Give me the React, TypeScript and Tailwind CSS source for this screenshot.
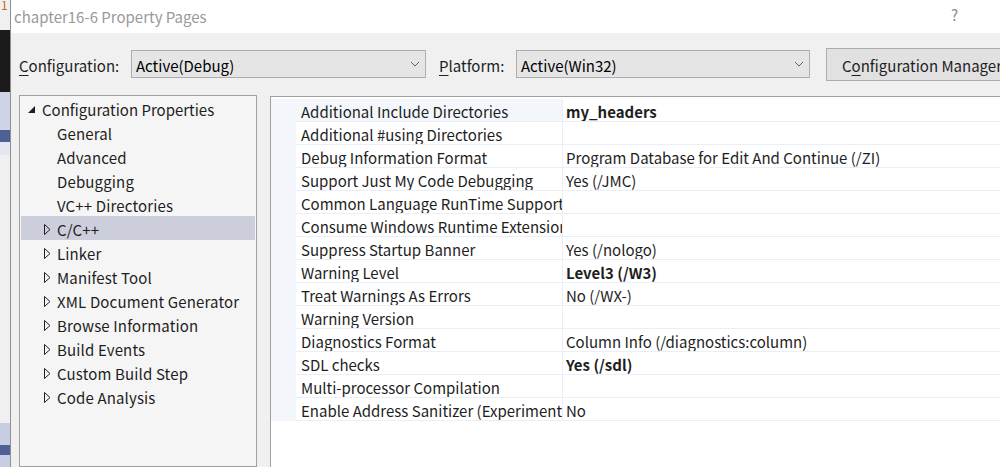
import React from "react";

const FONT = "font-['Noto_Sans_CJK_KR','Noto_Sans',sans-serif]";

function Chevron() {
  return (
    <svg width="10" height="6" viewBox="0 0 10 6" className="shrink-0">
      <polyline points="1,1 5,5 9,1" fill="none" stroke="#606060" strokeWidth="1" />
    </svg>
  );
}

function Combo({ value, width }: { value: string; width: string }) {
  return (
    <div className={`${width} shrink-0 h-[28px] bg-[#e5e5e5] border border-[#adadad] flex items-center pl-[4px] pr-[5px] justify-between`}>
      <span className="text-[15px] text-black leading-none pt-[2px]">{value}</span>
      <Chevron />
    </div>
  );
}

function Expanded() {
  return (
    <svg width="7" height="7" viewBox="0 0 7 7" className="shrink-0">
      <polygon points="7,0 7,7 0,7" fill="#1e1e1e" />
    </svg>
  );
}

function Collapsed() {
  return (
    <svg width="7" height="11" viewBox="0 0 7 11" className="shrink-0">
      <polygon points="0.5,0.5 6,5.5 0.5,10.5" fill="none" stroke="#1e1e1e" strokeWidth="1" />
    </svg>
  );
}

const treeChildren: { label: string; collapsed: boolean; selected?: boolean }[] = [
  { label: "General", collapsed: false },
  { label: "Advanced", collapsed: false },
  { label: "Debugging", collapsed: false },
  { label: "VC++ Directories", collapsed: false },
  { label: "C/C++", collapsed: true, selected: true },
  { label: "Linker", collapsed: true },
  { label: "Manifest Tool", collapsed: true },
  { label: "XML Document Generator", collapsed: true },
  { label: "Browse Information", collapsed: true },
  { label: "Build Events", collapsed: true },
  { label: "Custom Build Step", collapsed: true },
  { label: "Code Analysis", collapsed: true },
];

const rows: { name: string; value: string; bold?: boolean }[] = [
  { name: "Additional Include Directories", value: "my_headers", bold: true },
  { name: "Additional #using Directories", value: "" },
  { name: "Debug Information Format", value: "Program Database for Edit And Continue (/ZI)" },
  { name: "Support Just My Code Debugging", value: "Yes (/JMC)" },
  { name: "Common Language RunTime Support", value: "" },
  { name: "Consume Windows Runtime Extension", value: "" },
  { name: "Suppress Startup Banner", value: "Yes (/nologo)" },
  { name: "Warning Level", value: "Level3 (/W3)", bold: true },
  { name: "Treat Warnings As Errors", value: "No (/WX-)" },
  { name: "Warning Version", value: "" },
  { name: "Diagnostics Format", value: "Column Info (/diagnostics:column)" },
  { name: "SDL checks", value: "Yes (/sdl)", bold: true },
  { name: "Multi-processor Compilation", value: "" },
  { name: "Enable Address Sanitizer (Experimental)", value: "No" },
];

export default function App() {
  return (
    <div className={`${FONT} w-[1000px] h-[467px] flex overflow-hidden bg-[#f0f0f0] text-[#1e1e1e]`}>
      {/* background window strip */}
      <div className="w-[10px] h-full flex flex-col shrink-0 overflow-hidden">
        <div className="h-[30px] bg-[#f0f0f0] relative">
          <span className="absolute left-[1px] -top-[3px] text-[12px] leading-[16px] text-[#c07020]">1</span>
        </div>
        <div className="h-[62px] bg-[#1b1b1b]" />
        <div className="h-[38px] bg-[#cfd3e6]" />
        <div className="h-[12px] bg-[#4e6096]" />
        <div className="h-[13px] bg-[#e4e7f0]" />
        <div className="h-[268px] bg-[#f0f0f0]" />
        <div className="h-[22px] bg-[#c7cde2]" />
        <div className="h-[10px] bg-[#4e6096]" />
        <div className="flex-1 bg-[#c7cde2]" />
      </div>
      <div className="w-[1px] h-full bg-[#8f8f8f] shrink-0" />

      {/* dialog */}
      <div className="flex-1 flex flex-col min-w-0 overflow-hidden">
        {/* title bar */}
        <div className="h-[33px] bg-white flex items-center shrink-0 pl-[3px] pr-[42px] justify-between">
          <span className="text-[15px] text-[#999999] leading-none">chapter16-6 Property Pages</span>
          <span className="text-[15px] text-[#8a8a8a] leading-none -mt-[4px]">?</span>
        </div>

        {/* config row */}
        <div className="h-[62px] flex items-center shrink-0 pl-[8px]">
          <span className="text-[15px] w-[112px] shrink-0 leading-none pt-[2px]">
            <span className="underline underline-offset-[3px]">C</span>onfiguration:
          </span>
          <Combo value="Active(Debug)" width="w-[295px]" />
          <span className="text-[15px] ml-[13px] w-[77px] shrink-0 leading-none pt-[2px]">
            <span className="underline underline-offset-[3px]">P</span>latform:
          </span>
          <Combo value="Active(Win32)" width="w-[294px]" />
          <div className="ml-[16px] h-[33px] w-[200px] shrink-0 bg-[#e1e1e1] border border-[#adadad] flex items-center pl-[15px] whitespace-nowrap">
            <span className="text-[15px] leading-none pt-[2px]">
              C<span className="underline underline-offset-[3px]">o</span>nfiguration Manager...
            </span>
          </div>
        </div>

        {/* panels */}
        <div className="flex-1 flex pl-[8px] gap-[13px] min-h-0">
          {/* tree */}
          <div className="w-[238px] shrink-0 border border-[#a0a0a0] bg-[#f5f5f5] px-[1px]">
            <div className="h-[24px] flex items-center pl-[7px] gap-[7px] pt-[2px]">
              <Expanded />
              <span className="text-[15px] leading-none">Configuration Properties</span>
            </div>
            {treeChildren.map((c) => (
              <div
                key={c.label}
                className={`h-[24px] flex items-center pt-[2px] ${c.selected ? "bg-[#cccedb]" : ""}`}
              >
                <div className="w-[36px] shrink-0 flex justify-end pr-[6px]">
                  {c.collapsed ? <Collapsed /> : null}
                </div>
                <span className="text-[15px] leading-none whitespace-nowrap tracking-[0.15px]">{c.label}</span>
              </div>
            ))}
          </div>

          {/* property grid */}
          <div className="flex-1 mt-[1px] border-l border-t border-[#a0a0a0] bg-white pt-[2px] min-w-0">
            <div className="flex">
              <div className="w-[25px] shrink-0 bg-[#f3f6fb]" />
              <div className="flex-1 flex flex-col min-w-0">
                {rows.map((r, i) => (
                  <div key={r.name} className="h-[23px] flex border-b border-[#e9eef7]">
                    <div
                      className={`w-[267px] shrink-0 overflow-hidden whitespace-nowrap flex items-center pl-[5px] pt-[2px] border-r border-[#e9eef7] ${
                        i === 0 ? "bg-[#f3f6fb]" : "bg-white"
                      }`}
                    >
                      <span className="text-[15px] leading-none">{r.name}</span>
                    </div>
                    <div className="flex-1 flex items-center pl-[3px] pt-[2px] whitespace-nowrap overflow-hidden">
                      <span className={`text-[15px] leading-none ${r.bold ? "font-bold" : ""}`}>{r.value}</span>
                    </div>
                  </div>
                ))}
              </div>
            </div>
          </div>
        </div>
      </div>
    </div>
  );
}
